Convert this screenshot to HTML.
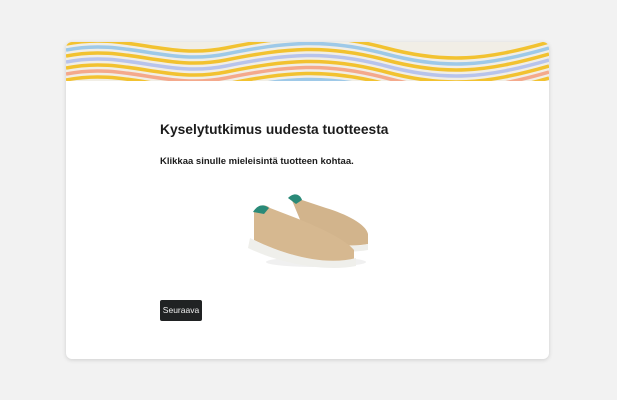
<!DOCTYPE html><html><head><style>
body{margin:0;width:617px;height:400px;background:#f2f2f2;font-family:"Liberation Sans",sans-serif;overflow:hidden}
.card{position:absolute;left:66px;top:42px;width:483px;height:317px;background:#fff;border-radius:6px;box-shadow:0 1px 4px rgba(0,0,0,.15);overflow:hidden}
h1{position:absolute;left:94px;top:80px;margin:0;font-size:13.8px;font-weight:bold;color:#1b1b1b}
p{position:absolute;left:94px;top:114px;margin:0;font-size:9.5px;font-weight:bold;color:#1b1b1b}
.btn{position:absolute;left:94px;top:258px;width:42px;height:21px;background:#202223;color:#eee;border-radius:2px;font-size:8.5px;line-height:21px;text-align:center}
</style></head><body><div class="card">
<svg width="483" height="39" style="position:absolute;left:0;top:0"><rect width="483" height="39" fill="#f1eee6"/>
<g fill="none" stroke-width="3.5">
<path d="M0 2 C60 -10 100 18 160 6 S260 -10 320 6 S420 18 483 0" stroke="#f2c230"/>
<path d="M0 8 C60 -4 100 24 160 12 S260 -4 320 12 S420 24 483 6" stroke="#9ec9e8"/>
<path d="M0 14 C60 2 100 30 160 18 S260 2 320 18 S420 30 483 12" stroke="#f2c230"/>
<path d="M0 20 C60 8 100 36 160 24 S260 8 320 24 S420 36 483 18" stroke="#b8c4ec"/>
<path d="M0 26 C60 14 100 42 160 30 S260 14 320 30 S420 42 483 24" stroke="#f2c230"/>
<path d="M0 32 C60 20 100 48 160 36 S260 20 320 36 S420 48 483 30" stroke="#f4a98c"/>
<path d="M0 38 C60 26 100 54 160 42 S260 26 320 42 S420 54 483 36" stroke="#f2c230"/>
<path d="M0 44 C60 32 100 60 160 48 S260 32 320 48 S420 60 483 42" stroke="#9ec9e8"/>
</g></svg>
<h1>Kyselytutkimus uudesta tuotteesta</h1>
<p>Klikkaa sinulle mieleisintä tuotteen kohtaa.</p>
<svg width="140" height="90" style="position:absolute;left:170px;top:148px">
<ellipse cx="80" cy="72" rx="50" ry="5" fill="#f0f0f0"/>
<path d="M55 8 C60 4 64 6 66 10 L90 18 C110 24 130 34 132 44 L132 54 C110 58 90 54 70 44 Z" fill="#d2b48c"/>
<path d="M66 46 C90 56 115 58 132 54 L132 60 C110 64 85 60 66 52 Z" fill="#eeeeea"/>
<path d="M52 8 C58 2 64 4 66 10 L60 14 Z" fill="#2a8a78"/>
<path d="M18 22 C22 14 30 14 34 18 L60 28 C85 38 110 50 118 60 L118 70 C90 76 50 66 18 50 Z" fill="#d6b890"/>
<path d="M14 48 C50 66 90 76 120 68 L120 76 C90 82 45 74 12 58 Z" fill="#efefeb"/>
<path d="M17 22 C22 14 28 14 33 18 L28 24 Z" fill="#2a8a78"/>
</svg>
<div class="btn">Seuraava</div>
</div></body></html>
